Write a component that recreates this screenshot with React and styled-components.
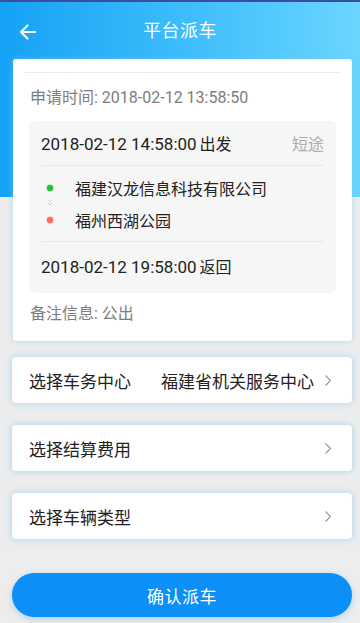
import React from "react";
import styled, { createGlobalStyle } from "styled-components";

const GlobalStyle = createGlobalStyle`
  html, body {
    margin: 0;
    padding: 0;
  }
  body {
    font-family: Roboto, "Noto Sans CJK SC", sans-serif;
    background: #ededed;
  }
`;

const Page = styled.div`
  min-height: 623px;
  border-top: 2px solid #3c4c9e;
  box-sizing: border-box;
  background: linear-gradient(90deg, #15a2f5 0%, #3cbcfb 50%, #6ad6ff 100%) top / 100% 195px no-repeat,
    #ededed;
  padding-bottom: 20px;
`;

const NavBar = styled.div`
  height: 57px;
  display: flex;
  align-items: center;
  justify-content: center;
  position: relative;
  color: #fff;
  font-size: 18px;
`;

const BackButton = styled.div`
  position: absolute;
  left: 18px;
  top: 20px;
  width: 20px;
  height: 20px;
  display: flex;
`;

const Title = styled.div`
  margin-top: -3px;
  letter-spacing: 0.5px;
`;

const Card = styled.div`
  margin: 0 8px 0 13px;
  background: #fff;
  border-radius: 3px;
  padding: 13px 16px 16px;
  box-shadow: 0 0 6px rgba(120, 195, 240, 0.55);
`;

const TopLine = styled.div`
  height: 1px;
  background: #ececec;
  margin: 0 -4px;
`;

const InfoText = styled.div`
  color: #7d7d7d;
  font-size: 16px;
  line-height: 22px;
  padding: ${(p) => p.$pad || "0"};
`;

const TripBox = styled.div`
  background: #f6f6f6;
  border-radius: 5px;
  padding: 0 12px;
`;

const TripRow = styled.div`
  display: flex;
  align-items: center;
  justify-content: space-between;
  height: ${(p) => p.$h}px;
  font-size: 16px;
  color: #222;
  border-bottom: ${(p) => (p.$last ? "none" : "1px solid #e8e8e8")};
  padding-bottom: ${(p) => p.$pb || 0}px;
  box-sizing: border-box;
`;

const Time = styled.span`
  font-size: 17px;
  margin-right: 3px;
`;

const Tag = styled.span`
  color: #acacac;
  font-size: 16px;
`;

const Route = styled.div`
  height: 76px;
  border-bottom: 1px solid #e8e8e8;
  box-sizing: border-box;
  display: flex;
  flex-direction: column;
  justify-content: center;
  gap: 5px;
  padding-top: 1px;
`;

const Stop = styled.div`
  display: flex;
  align-items: center;
  font-size: 16px;
  color: #222;
  height: 22px;
`;

const Dot = styled.span`
  width: 6px;
  height: 6px;
  border-radius: 50%;
  background: ${(p) => p.$color};
  box-shadow: 0 0 2px ${(p) => p.$color};
  margin: 0 22px 0 6px;
`;

const Arrows = styled.div`
  position: relative;
  height: 0;
  svg {
    position: absolute;
    left: 6px;
    top: -5px;
  }
`;

const List = styled.div`
  display: flex;
  flex-direction: column;
  gap: 22px;
  margin: 16px 8px 0 12px;
`;

const SelectRow = styled.div`
  height: 46px;
  background: #fff;
  border-radius: 4px;
  display: flex;
  align-items: center;
  padding: 0 20px 0 17px;
  box-shadow: 0 0 7px rgba(110, 190, 240, 0.6);
  font-size: 17px;
  color: #222;
`;

const Label = styled.span`
  flex: 1;
`;

const Value = styled.span`
  color: #222;
  margin-right: 10px;
`;

const ConfirmButton = styled.div`
  margin: 34px 8px 0 12px;
  height: 44px;
  border-radius: 22px;
  background: #0c8ff6;
  color: #fff;
  font-size: 17px;
  display: flex;
  align-items: center;
  justify-content: center;
  letter-spacing: 0.5px;
  box-shadow: 0 2px 6px rgba(12, 143, 246, 0.3);
`;

const Chevron = () => (
  <svg width="8" height="13" viewBox="0 0 8 13">
    <polyline points="1.5,1.5 6.5,6.5 1.5,11.5" fill="none" stroke="#9a9a9a" strokeWidth="1.2" />
  </svg>
);

const rows = [
  { label: "选择车务中心", value: "福建省机关服务中心" },
  { label: "选择结算费用" },
  { label: "选择车辆类型" },
];

const App = () => (
  <Page>
    <GlobalStyle />
    <NavBar>
      <BackButton>
        <svg width="20" height="20" viewBox="0 0 20 20">
          <path d="M17 10H3.5M9.5 3.5L3 10l6.5 6.5" fill="none" stroke="#fff" strokeWidth="2.2" strokeLinecap="round" strokeLinejoin="round" />
        </svg>
      </BackButton>
      <Title>平台派车</Title>
    </NavBar>
    <Card>
      <TopLine />
      <InfoText $pad="14px 0 12px 1px">申请时间: 2018-02-12 13:58:50</InfoText>
      <TripBox>
        <TripRow $h={45}>
          <span>
            <Time>2018-02-12 14:58:00</Time>出发
          </span>
          <Tag>短途</Tag>
        </TripRow>
        <Route>
          <Stop>
            <Dot $color="#1fc23a" />
            福建汉龙信息科技有限公司
          </Stop>
          <Arrows>
            <svg width="6" height="8" viewBox="0 0 6 8">
              <polyline points="1,1 3,3 5,1" fill="none" stroke="#c8c8c8" strokeWidth="0.8" />
              <polyline points="1,4 3,6 5,4" fill="none" stroke="#c8c8c8" strokeWidth="0.8" />
            </svg>
          </Arrows>
          <Stop>
            <Dot $color="#ff6868" />
            福州西湖公园
          </Stop>
        </Route>
        <TripRow $h={51} $pb={3} $last>
          <span>
            <Time>2018-02-12 19:58:00</Time>返回
          </span>
        </TripRow>
      </TripBox>
      <InfoText $pad="10px 0 0 1px">备注信息: 公出</InfoText>
    </Card>
    <List>
      {rows.map((r) => (
        <SelectRow key={r.label}>
          <Label>{r.label}</Label>
          {r.value && <Value>{r.value}</Value>}
          <Chevron />
        </SelectRow>
      ))}
    </List>
    <ConfirmButton>确认派车</ConfirmButton>
  </Page>
);

export default App;
